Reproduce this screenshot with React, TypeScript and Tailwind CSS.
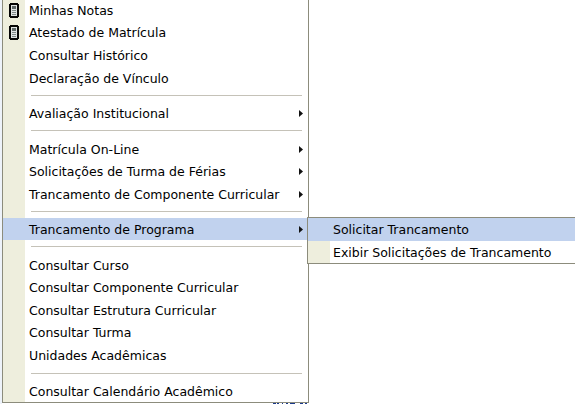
import React from 'react';

type Row = { label?: string; sep?: boolean; arrow?: boolean; icon?: boolean; active?: boolean; h: string; pt?: string };

const rows: Row[] = [
  { label: 'Minhas Notas', icon: true, h: 'h-[21px]' },
  { label: 'Atestado de Matrícula', icon: true, h: 'h-[23px]' },
  { label: 'Consultar Histórico', h: 'h-[23px]' },
  { label: 'Declaração de Vínculo', h: 'h-[23px]' },
  { sep: true, h: 'h-[12px]', pt: 'pt-[5px]' },
  { label: 'Avaliação Institucional', arrow: true, h: 'h-[23px]' },
  { sep: true, h: 'h-[13px]', pt: 'pt-[5px]' },
  { label: 'Matrícula On-Line', arrow: true, h: 'h-[22px]' },
  { label: 'Solicitações de Turma de Férias', arrow: true, h: 'h-[23px]' },
  { label: 'Trancamento de Componente Curricular', arrow: true, h: 'h-[23px]' },
  { sep: true, h: 'h-[12px]', pt: 'pt-[5px]' },
  { label: 'Trancamento de Programa', arrow: true, active: true, h: 'h-[22px]' },
  { sep: true, h: 'h-[14px]', pt: 'pt-[6px]' },
  { label: 'Consultar Curso', h: 'h-[22px]' },
  { label: 'Consultar Componente Curricular', h: 'h-[23px]' },
  { label: 'Consultar Estrutura Curricular', h: 'h-[22px]' },
  { label: 'Consultar Turma', h: 'h-[23px]' },
  { label: 'Unidades Acadêmicas', h: 'h-[23px]' },
  { sep: true, h: 'h-[13px]', pt: 'pt-[6px]' },
  { label: 'Consultar Calendário Acadêmico', h: 'h-[22px]' },
];

function PhoneIcon() {
  return (
    <svg width="10" height="15" viewBox="0 0 10 15" shapeRendering="crispEdges">
      <path d="M1 0h8v1h1v13h-1v1H1v-1H0V1h1z" fill="#050505" />
      <rect x="2" y="2" width="6" height="11" fill="#dfe3e3" />
      <rect x="3" y="3" width="4" height="3" fill="#5f6868" />
      <rect x="3" y="7" width="4" height="1" fill="#7f8888" />
      <rect x="3" y="9" width="4" height="1" fill="#7f8888" />
      <rect x="3" y="11" width="4" height="1" fill="#7f8888" />
    </svg>
  );
}

function MenuRow({ row }: { row: Row }) {
  return (
    <div className={`flex items-stretch ${row.h} ${row.active ? 'bg-[#c1d2ee]' : ''}`}>
      <div className={`w-[22px] shrink-0 flex items-center justify-center pb-[1px] ${row.active ? '' : 'bg-[#eeeedd]'}`}>
        {row.icon && <PhoneIcon />}
      </div>
      <div className="flex-1 flex items-center pl-[4px] pt-[2px] text-black">{row.label}</div>
      {row.arrow && (
        <div className="w-[9px] shrink-0 flex items-center">
          <svg width="4" height="7" viewBox="0 0 4 7">
            <path d="M0 0 L4 3.5 L0 7 Z" fill="#111" />
          </svg>
        </div>
      )}
    </div>
  );
}

export default function App() {
  return (
    <div className="relative w-[575px] h-[404px] overflow-hidden bg-white text-[12.5px] font-['DejaVu_Sans',Verdana,sans-serif]">
      <div className="flex h-[404px] items-start">
        <div className="w-[2px] h-full bg-[#eef3fa] shrink-0" />
        <div className="w-[307px] bg-white border-x border-b border-[#8c8c7c] shrink-0 flex flex-col">
          {rows.map((row, i) =>
            row.sep ? (
              <div key={i} className={`flex ${row.h}`}>
                <div className="w-[22px] bg-[#eeeedd]" />
                <div className={`flex-1 px-[6px] ${row.pt}`}>
                  <div className="w-full h-px bg-[#c5c2b8]" />
                </div>
              </div>
            ) : (
              <MenuRow key={i} row={row} />
            ),
          )}
        </div>
      </div>

      {/* tops of the page text poking out under the menu */}
      <svg className="absolute left-[273px] top-[403px]" width="34" height="1" viewBox="0 0 34 1" shapeRendering="crispEdges">
        <path d="M0 0h3v1H0zM4 0h2v1H4zM9 0h1v1H9zM13 0h2v1h-2zM17 0h5v1h-5zM27 0h3v1h-3zM32 0h2v1h-2z" fill="#1a3a8a" />
      </svg>

      {/* submenu */}
      <div className="absolute left-[307px] top-[217px] w-[268px] bg-white border-y border-l border-[#8c8c7c]">
        <div className="flex h-[23px] bg-[#c1d2ee]">
          <div className="w-[22px] shrink-0" />
          <div className="flex-1 flex items-center pl-[3px] pt-[2px] text-black">Solicitar Trancamento</div>
        </div>
        <div className="flex h-[22px]">
          <div className="w-[22px] shrink-0 bg-[#eeeedd]" />
          <div className="flex-1 flex items-center pl-[3px] pt-[2px] text-black">Exibir Solicitações de Trancamento</div>
        </div>
      </div>
    </div>
  );
}
